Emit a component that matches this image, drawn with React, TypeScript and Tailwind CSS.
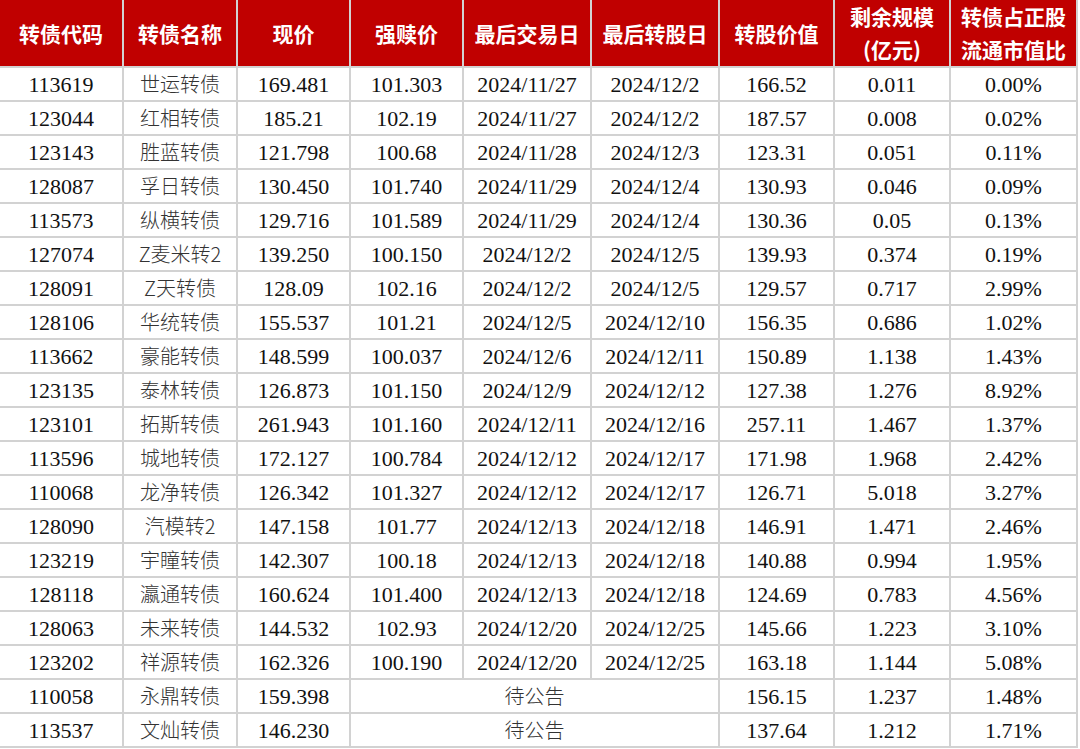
const headers: string[][] = [
  ["转债代码"],
  ["转债名称"],
  ["现价"],
  ["强赎价"],
  ["最后交易日"],
  ["最后转股日"],
  ["转股价值"],
  ["剩余规模", "(亿元)"],
  ["转债占正股", "流通市值比"],
];

// code, name, price, redeem, lastTrade, lastConvert, value, remaining, ratio
const rows: string[][] = [
  ["113619", "世运转债", "169.481", "101.303", "2024/11/27", "2024/12/2", "166.52", "0.011", "0.00%"],
  ["123044", "红相转债", "185.21", "102.19", "2024/11/27", "2024/12/2", "187.57", "0.008", "0.02%"],
  ["123143", "胜蓝转债", "121.798", "100.68", "2024/11/28", "2024/12/3", "123.31", "0.051", "0.11%"],
  ["128087", "孚日转债", "130.450", "101.740", "2024/11/29", "2024/12/4", "130.93", "0.046", "0.09%"],
  ["113573", "纵横转债", "129.716", "101.589", "2024/11/29", "2024/12/4", "130.36", "0.05", "0.13%"],
  ["127074", "Z麦米转2", "139.250", "100.150", "2024/12/2", "2024/12/5", "139.93", "0.374", "0.19%"],
  ["128091", "Z天转债", "128.09", "102.16", "2024/12/2", "2024/12/5", "129.57", "0.717", "2.99%"],
  ["128106", "华统转债", "155.537", "101.21", "2024/12/5", "2024/12/10", "156.35", "0.686", "1.02%"],
  ["113662", "豪能转债", "148.599", "100.037", "2024/12/6", "2024/12/11", "150.89", "1.138", "1.43%"],
  ["123135", "泰林转债", "126.873", "101.150", "2024/12/9", "2024/12/12", "127.38", "1.276", "8.92%"],
  ["123101", "拓斯转债", "261.943", "101.160", "2024/12/11", "2024/12/16", "257.11", "1.467", "1.37%"],
  ["113596", "城地转债", "172.127", "100.784", "2024/12/12", "2024/12/17", "171.98", "1.968", "2.42%"],
  ["110068", "龙净转债", "126.342", "101.327", "2024/12/12", "2024/12/17", "126.71", "5.018", "3.27%"],
  ["128090", "汽模转2", "147.158", "101.77", "2024/12/13", "2024/12/18", "146.91", "1.471", "2.46%"],
  ["123219", "宇瞳转债", "142.307", "100.18", "2024/12/13", "2024/12/18", "140.88", "0.994", "1.95%"],
  ["128118", "瀛通转债", "160.624", "101.400", "2024/12/13", "2024/12/18", "124.69", "0.783", "4.56%"],
  ["128063", "未来转债", "144.532", "102.93", "2024/12/20", "2024/12/25", "145.66", "1.223", "3.10%"],
  ["123202", "祥源转债", "162.326", "100.190", "2024/12/20", "2024/12/25", "163.18", "1.144", "5.08%"],
  ["110058", "永鼎转债", "159.398", "", "", "", "156.15", "1.237", "1.48%"],
  ["113537", "文灿转债", "146.230", "", "", "", "137.64", "1.212", "1.71%"],
];

const num = "bg-white flex items-center justify-center text-[22px] text-[#111] font-['Liberation_Serif','Noto_Sans_CJK_SC',serif]";
const cjk = "bg-white flex items-center justify-center text-[20px] font-light text-[#333] font-['Noto_Sans_CJK_SC',sans-serif]";

export default function App() {
  return (
    <div className="w-[1080px] h-[749px] bg-white overflow-hidden">
      <div className="w-fit grid grid-cols-[122px_112px_111px_111px_126px_126px_113px_114px_125px] grid-rows-[66px_repeat(20,32px)] gap-[2px] pr-[2px] pb-[2px] bg-[#d2d2d2]">
        {headers.map((h, i) => (
          <div
            key={i}
            className="bg-[#c00000] text-white flex flex-col items-center justify-center text-[21px] leading-[33px] font-bold font-['Noto_Sans_CJK_SC',sans-serif]"
          >
            {h.map((line) => (
              <span key={line}>{line}</span>
            ))}
          </div>
        ))}
        {rows.map((r) => {
          const pending = r[3] === "";
          return [
            <div key={r[0] + "c"} className={num}>{r[0]}</div>,
            <div key={r[0] + "n"} className={cjk}>{r[1]}</div>,
            <div key={r[0] + "p"} className={num}>{r[2]}</div>,
            ...(pending
              ? [
                  <div key={r[0] + "w"} className={cjk + " col-span-3"}>
                    待公告
                  </div>,
                ]
              : [
                  <div key={r[0] + "r"} className={num}>{r[3]}</div>,
                  <div key={r[0] + "t"} className={num}>{r[4]}</div>,
                  <div key={r[0] + "s"} className={num}>{r[5]}</div>,
                ]),
            <div key={r[0] + "v"} className={num}>{r[6]}</div>,
            <div key={r[0] + "m"} className={num}>{r[7]}</div>,
            <div key={r[0] + "x"} className={num}>{r[8]}</div>,
          ];
        })}
      </div>
    </div>
  );
}
